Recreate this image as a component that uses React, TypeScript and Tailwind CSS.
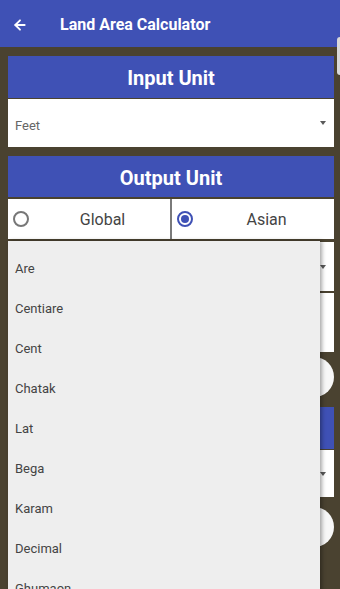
import { ArrowLeft } from "lucide-react";

const units = ["Are", "Centiare", "Cent", "Chatak", "Lat", "Bega", "Karam", "Decimal", "Ghumaon", "Kanal"];

function Caret() {
  return <span className="w-0 h-0 border-l-[3.5px] border-r-[3.5px] border-t-[4px] border-l-transparent border-r-transparent border-t-[#5a5a5a]" />;
}

function SelectBox({ label, h }: { label: string; h: string }) {
  return (
    <div className={`${h} bg-white flex items-center justify-between pl-[7px] pr-[8px]`}>
      <span className="pt-[5px] text-[13px] text-[#666]">{label}</span>
      <Caret />
    </div>
  );
}

function Radio({ label, checked }: { label: string; checked?: boolean }) {
  return (
    <div className="flex-1 bg-white flex items-center pl-[5px]">
      {checked ? (
        <span className="w-[16px] h-[16px] rounded-full border-2 border-[#3f51b5] flex items-center justify-center">
          <span className="w-[8px] h-[8px] rounded-full bg-[#3f51b5]" />
        </span>
      ) : (
        <span className="w-[16px] h-[16px] rounded-full border-2 border-[#777]" />
      )}
      <span className="flex-1 text-center pl-[6px] pt-[2px] text-[16px] text-[#444]">{label}</span>
    </div>
  );
}

export default function App() {
  return (
    <div className="relative w-[340px] h-[589px] overflow-hidden bg-[#4a4230]" style={{ fontFamily: "Roboto, 'Noto Sans', sans-serif" }}>
      <header className="h-[47px] bg-[#3f51b5] flex items-center pl-[12px] pt-[3px]">
        <ArrowLeft size={16} strokeWidth={2.75} className="text-white" />
        <h1 className="ml-[32px] text-white font-bold text-[16px]">Land Area Calculator</h1>
      </header>

      <div className="absolute right-0 top-[37px] w-[3px] h-[38px] bg-[#d9d9d9] rounded-l" />

      <main className="pl-2 pr-[6px] pt-[9px] flex flex-col">
        <div className="h-[42px] bg-[#3f51b5] flex items-center justify-center pt-[1px] text-white font-bold text-[20px]">Input Unit</div>
        <div className="mt-px">
          <SelectBox label="Feet" h="h-[48px]" />
        </div>

        <div className="mt-[9px] h-[41px] bg-[#3f51b5] flex items-center justify-center pt-[2px] text-white font-bold text-[20px]">Output Unit</div>
        <div className="mt-[2px] h-[40px] flex gap-[2px] bg-[#7a7a7a]">
          <Radio label="Global" />
          <Radio label="Asian" checked />
        </div>
        <div className="mt-[3px]">
          <SelectBox label="" h="h-[49px]" />
        </div>
        <div className="mt-[2px] h-[59px] bg-white" />
        <div className="mt-[5px] h-[40px] bg-[#f7f7f7] rounded-[20px]" />
        <div className="mt-[10px] h-[42px] bg-[#3f51b5]" />
        <div className="mt-px">
          <SelectBox label="" h="h-[47px]" />
        </div>
        <div className="mt-[10px] h-[40px] bg-[#f7f7f7] rounded-[20px]" />
      </main>

      <ul className="absolute left-2 top-[241px] w-[312px] h-[400px] bg-[#eeeeee] pt-[8px] shadow-[2px_0_4px_rgba(0,0,0,0.35)]">
        {units.map((u) => (
          <li key={u} className="h-[40px] flex items-center pl-[7px] text-[13px] text-[#444]">{u}</li>
        ))}
      </ul>
    </div>
  );
}
